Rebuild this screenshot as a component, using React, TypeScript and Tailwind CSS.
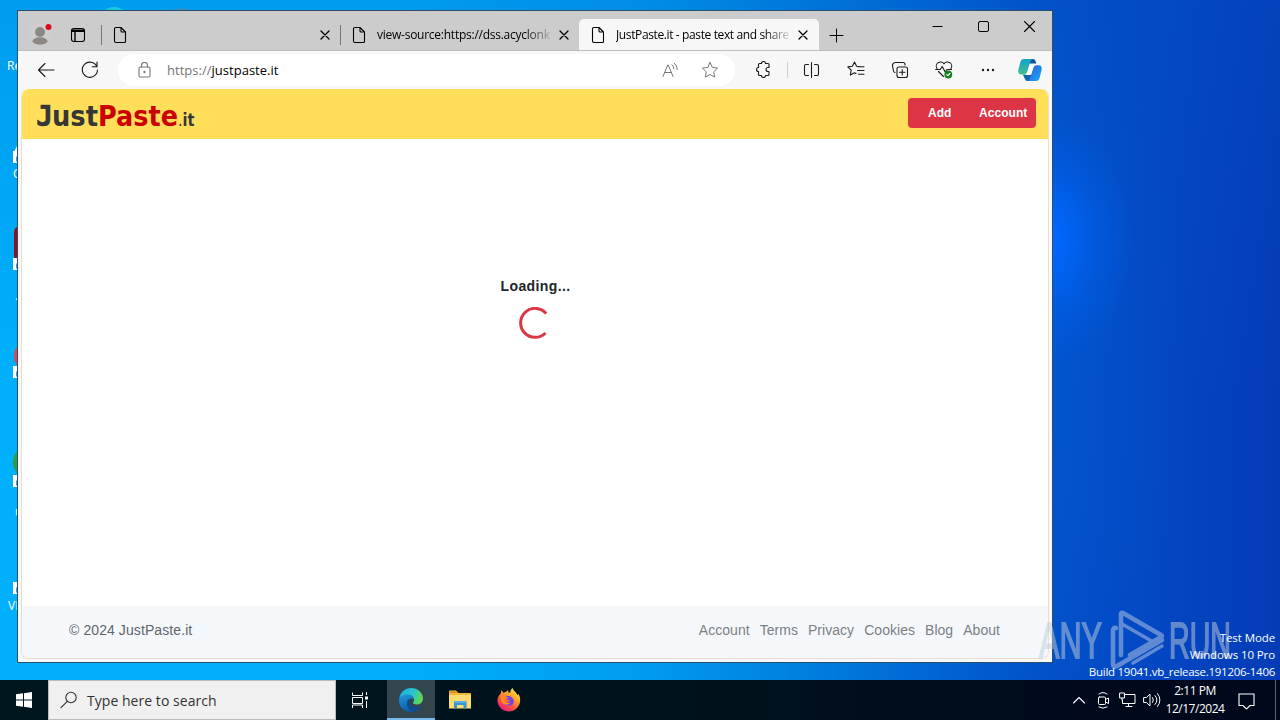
import type { ReactNode } from "react";

const UI = "font-['Open_Sans','Noto_Sans',sans-serif]";

function Svg({ w, h, vb, className = "", children }: { w: number; h: number; vb?: string; className?: string; children: ReactNode }) {
  return (
    <svg width={w} height={h} viewBox={vb ?? `0 0 ${w} ${h}`} fill="none" stroke="currentColor" strokeWidth="1.1" strokeLinecap="round" strokeLinejoin="round" className={`block shrink-0 ${className}`}>
      {children}
    </svg>
  );
}

const PageIcon = () => (
  <Svg w={14} h={18}>
    <path d="M3 1.500h5L12.500 6v9.500a1 1 0 0 1-1 1H3a1.500 1.500 0 0 1-1.500-1.500V3A1.500 1.500 0 0 1 3 1.500ZM8 1.500V5a1 1 0 0 0 1 1h3.500" />
  </Svg>
);

const Close = () => (
  <Svg w={10} h={10}>
    <path d="m1 1 8 8M9 1 1 9" strokeWidth="1.300" />
  </Svg>
);

function Tab({ title, active, className }: { title: string; active?: boolean; className: string }) {
  return (
    <div className={`flex h-[31px] shrink-0 items-center pt-px ${active ? "rounded-t-[5px] bg-[#f7f7f7]" : ""} ${className}`}>
      <PageIcon />
      <div className="ml-[11px] h-5 w-[174px] overflow-hidden [mask-image:linear-gradient(to_right,black_148px,transparent_177px)]">
        <span className="block w-max text-[12px] leading-5 tracking-[-0.38px]">{title}</span>
      </div>
      <div className="ml-2"><Close /></div>
    </div>
  );
}

function TabStrip() {
  return (
    <div className="flex h-10 items-end border-b border-[#bdbdbd] bg-[#cccccc]">
      <div className="flex h-8 w-11 items-center justify-center">
        <Svg w={24} h={24} className="mb-0.5">
          <circle cx="12" cy="12" r="11" fill="#d0cecd" stroke="none" />
          <circle cx="12" cy="11" r="5" fill="#8b8886" stroke="none" />
          <ellipse cx="12" cy="20" rx="7.500" ry="3.700" fill="#8b8886" stroke="none" />
          <circle cx="20.500" cy="6" r="3" fill="#d90b20" stroke="none" />
        </Svg>
      </div>
      <div className="flex h-[31px] w-8 items-center justify-center pt-px">
        <Svg w={16} h={16}>
          <rect x="1.500" y="1.500" width="13" height="13" rx="2.500" />
          <path d="M2 3.200h12M2 4.300h12M5 5v9" strokeWidth="1.400" />
        </Svg>
      </div>
      <div className="mb-[5px] ml-[7px] h-5 w-px bg-[#777]" />
      <Tab title="" className="w-[238px] pl-[11px]" />
      <div className="mb-[5px] h-5 w-px bg-[#777]" />
      <Tab title="view-source:https://dss.acyclonk" className="w-[238px] pl-[11px] [&_span]:tracking-[-0.25px]" />
      <Tab title="JustPaste.it - paste text and share" active className="w-[240px] pl-3" />
      <div className="flex h-[31px] w-[35px] items-center justify-center pt-px">
        <Svg w={15} h={15}><path d="M7.500 1v13M1 7.500h13" strokeWidth="1" /></Svg>
      </div>
      <div className="mb-[9px] ml-auto flex h-[30px] items-center">
        <div className="flex w-[46px] justify-center"><Svg w={11} h={11}><path d="M.5 5.500h10" strokeLinecap="butt" strokeWidth="1" /></Svg></div>
        <div className="flex w-[46px] justify-center"><Svg w={11} h={11}><rect x=".5" y=".5" width="10" height="10" rx="1.500" strokeWidth="1" /></Svg></div>
        <div className="flex w-[46px] justify-center"><Svg w={11} h={11}><path d="m.5.5 10 10M10.500.5l-10 10" /></Svg></div>
      </div>
    </div>
  );
}

function Tool({ children, className = "w-11" }: { children: ReactNode; className?: string }) {
  return <div className={`flex h-8 shrink-0 items-center justify-center ${className}`}>{children}</div>;
}

function Toolbar() {
  return (
    <div className="flex h-[37px] items-center bg-[#f7f7f7] pl-1.5 text-[#1b1b1b]">
      <Tool><Svg w={18} h={16}><path d="M17 8H1.500M8 1.500 1.500 8 8 14.500" strokeWidth="1.100" /></Svg></Tool>
      <Tool>
        <Svg w={18} h={18}><path d="M15.800 5.500A7.600 7.600 0 1 0 16.500 9M16 1v4.700h-4.700" /></Svg>
      </Tool>
      <div className="ml-1.5 flex h-8 w-[617px] shrink-0 items-center rounded-full bg-white pl-5 text-[#767676]">
        <Svg w={13} h={16}>
          <rect x="1" y="5" width="11" height="10" rx="1.500" />
          <path d="M3.500 5V3.500a3 3 0 0 1 6 0V5" />
          <circle cx="6.500" cy="10" r=".6" fill="currentColor" />
        </Svg>
        <span className="ml-4 text-[13px] leading-5 tracking-[0.02px]">https://<span className="text-black">justpaste.it</span></span>
        <div className="ml-auto flex items-center pr-4">
          <Svg w={17} h={16} className="mr-[22px]">
            <path d="M1 14.500 5.700 3h.6L11 14.500M2.700 10.500h6.600M10 2.800q2 1.400 2 4M12.300 1.200q3 2.300 3 6.300" strokeWidth="1" />
          </Svg>
          <Svg w={18} h={18}>
            <path d="m9 1.500 2.300 4.900 5.300.7-3.900 3.700 1 5.300L9 13.500l-4.700 2.600 1-5.300-3.900-3.700 5.300-.7Z" strokeWidth="1" />
          </Svg>
        </div>
      </div>
      <Tool className="ml-1.5 w-11">
        <Svg w={16} h={17}>
          <path d="M4.500 2.500H6.500a2 2 0 0 1 4 0H13a1 1 0 0 1 1 1V6.500H13a1.900 1.900 0 0 0 0 4h1v3a1 1 0 0 1-1 1h-2.500a2 2 0 0 1-4 0H4.500a1 1 0 0 1-1-1v-3a2 2 0 1 1 0-4v-3a1 1 0 0 1 1-1Z" />
        </Svg>
      </Tool>
      <div className="ml-0.5 mr-px h-4 w-px bg-[#cfcfcf]" />
      <Tool><Svg w={17} h={16}><path d="M5.500 2.500H3A1.500 1.500 0 0 0 1.500 4v8A1.500 1.500 0 0 0 3 13.500h2.500M11.500 2.500H14A1.500 1.500 0 0 1 15.500 4v8a1.500 1.500 0 0 1-1.500 1.500h-2.500M8.500.6v15" /></Svg></Tool>
      <Tool className="ml-px w-11"><Svg w={18} h={17}><path d="m12 5.500-2.400-.3L7.500 1 5.400 5.200.8 5.900l3.400 3.300-.9 4.900 4.200-2.300 1.500.8M11 5.800h6M10.500 9.500H17M11.500 13.200H17" /></Svg></Tool>
      <Tool>
        <Svg w={18} h={18}>
          <rect x="6" y="6" width="10.500" height="10.500" rx="2" />
          <path d="M11.250 8.500v5.500M8.500 11.250H14M14 4V3.500A2 2 0 0 0 12 1.500H4.500a3 3 0 0 0-3 3.500l1 5a2 2 0 0 0 1.500 1.500" />
        </Svg>
      </Tool>
      <Tool>
        <Svg w={18} h={18}>
          <path d="M2 7.500a4 4 0 0 1 7-4.700 4 4 0 0 1 7 4.700M3.500 10.500 8.500 15.500M.7 8.500h4.500l2-3 3 5.500 1.800-2.500h4.500" />
          <circle cx="13.300" cy="13.500" r="3.900" fill="#16811d" stroke="none" />
          <path d="m11.700 13.600 1.100 1.100 2.100-2.200" stroke="white" />
        </Svg>
      </Tool>
      <Tool>
        <Svg w={14} h={4}>
          <circle cx="2" cy="2" r="1.200" fill="currentColor" stroke="none" />
          <circle cx="7" cy="2" r="1.200" fill="currentColor" stroke="none" />
          <circle cx="12" cy="2" r="1.200" fill="currentColor" stroke="none" />
        </Svg>
      </Tool>
      <Tool className="w-10">
        <Svg w={24} h={22}>
          <defs>
            <linearGradient id="cpA" x1="0" y1="0" x2="0" y2="1"><stop stopColor="#149fce" /><stop offset="1" stopColor="#40c18d" /></linearGradient>
            <linearGradient id="cpB" x1="0" y1="0" x2="1" y2="1"><stop stopColor="#3560cb" /><stop offset="1" stopColor="#18a8ff" /></linearGradient>
          </defs>
          <g stroke="none">
            <path d="M10 0h5c1.800 0 2.600 1.500 3.200 4.500H11Z" fill="#0c57a1" />
            <path d="M5 15.500h8.500L12 22H9.500C7.500 22 6.500 19.500 5 15.500Z" fill="#1164b5" />
            <path d="M6 0h9c-1.500 0-2.300 1.500-2.800 3L9.500 12c-.6 2-1.600 3.500-3.500 3.500H3.200C.5 15.500-.2 13 .4 10.500l2-7.500C3 1 4.200 0 6 0Z" fill="url(#cpA)" />
            <path d="M18 22H9.300c1.500 0 2.300-1.500 2.800-3l2.700-9c.6-2 1.600-3.700 3.500-3.700h2.500c2.700 0 3.400 2.200 2.800 4.700l-2 8C21 21 19.800 22 18 22Z" fill="url(#cpB)" />
            <path d="M13.500 6.300h4.300c-1.500.4-2.400 1.700-2.900 3.400l-1.500 5c-.3 1-1.200 1.300-2.200 1.300H6.500c1.500-.3 2.400-1.700 3-3.500l1.300-4.200c.4-1.300 1.200-2 2.700-2Z" fill="white" />
          </g>
        </Svg>
      </Tool>
    </div>
  );
}

function Page() {
  return (
    <div className="mx-[3px] mt-px flex h-[570px] flex-col overflow-hidden rounded-lg border border-t-0 border-[#ecdcd3] bg-white font-['Liberation_Sans',sans-serif]">
      <header className="flex h-[50px] shrink-0 items-start justify-between bg-[#ffde59] pl-[15px] pr-3 pt-[9px]">
        <Svg w={160} h={36}>
          <g stroke="none" fontFamily="'DejaVu Sans','Noto Sans',sans-serif" fontWeight="700">
            <text y="28" fontSize="28.5" fill="#363636">
              <tspan x="-1" textLength="17" lengthAdjust="spacingAndGlyphs" fontFamily="'DejaVu Sans Mono',monospace" stroke="#363636" strokeWidth=".5">J</tspan>
              <tspan x="15" textLength="46" lengthAdjust="spacingAndGlyphs">ust</tspan>
            </text>
            <text x="61" y="28" fontSize="28.5" fill="#cc0000" textLength="80" lengthAdjust="spacingAndGlyphs">Paste</text>
            <text x="141" y="28" fontSize="17" fill="#363636" textLength="16.500" lengthAdjust="spacingAndGlyphs"><tspan fontWeight="400">.</tspan>it</text>
          </g>
        </Svg>
        <nav className="flex h-[30px] w-32 items-center rounded bg-[#dc3545] pl-5 text-[12px] font-bold text-white">
          <a className="w-[51px] tracking-[0.05px]">Add</a>
          <a className="tracking-[0.05px]">Account</a>
        </nav>
      </header>
      <main className="flex flex-1 flex-col items-center pt-[137px]">
        <p className="pl-px text-[14px] font-bold leading-5 tracking-[0.38px] text-[#212529]">Loading...</p>
        <Svg w={32} h={32} className="mt-[11px] text-[#dc3545]">
          <path d="M27.200 6.500A14.500 14.500 0 1 0 26.500 26" strokeWidth="3" strokeLinecap="butt" />
        </Svg>
      </main>
      <footer className="flex h-[52px] shrink-0 items-center justify-between bg-[#f5f8fb] pb-[3px] pl-[47px] pr-[48px] text-[14px] text-[#5f656b]">
        <span className="tracking-[0.09px]">© 2024 JustPaste.it</span>
        <nav className="flex gap-[10px] tracking-[0.04px] text-[#7b7f84]">
          <a>Account</a><a>Terms</a><a>Privacy</a><a>Cookies</a><a>Blog</a><a>About</a>
        </nav>
      </footer>
    </div>
  );
}

function Shortcut({ className }: { className: string }) {
  return (
    <div className={`absolute left-[13px] h-3 w-3 bg-white ${className}`}>
      <Svg w={12} h={12} className="text-[#2370b8]"><path d="M4 10V6h4M6 4l2 2-2 2" strokeWidth="1.500" /></Svg>
    </div>
  );
}

function DesktopIcons() {
  return (
    <>
      <div className="absolute left-[98px] top-[7px] h-8 w-8 rounded-full bg-[#18c8d8]" />
      <div className="absolute left-[164px] top-[8px] h-6 w-9 rounded-[50%] bg-[#2a93cc]" />
      <span className="absolute left-[7px] top-[58px] text-[12px] leading-4">Re</span>
      <Shortcut className="top-[151px]" />
      <Svg w={6} h={6} className="absolute left-[14px] top-[146px]"><path d="M0 6 3 0l3 6Z" fill="white" stroke="none" /></Svg>
      <span className="absolute left-[13px] top-[166px] text-[12px] leading-4">C</span>
      <div className="absolute left-[14px] top-[226px] h-9 w-10 rounded-md bg-[#8f1218]" />
      <Shortcut className="top-[258px]" />
      <span className="absolute left-[15px] top-[288px] text-[12px] leading-4">.</span>
      <div className="absolute left-[14px] top-[340px] h-8 w-8 rounded-full bg-[#e0474c]" />
      <Shortcut className="top-[366px]" />
      <div className="absolute left-[13px] top-[446px] h-8 w-8 rounded-full bg-[#2f9b43]" />
      <Shortcut className="top-[475px]" />
      <span className="absolute left-[15px] top-[504px] text-[12px] leading-4">u</span>
      <Shortcut className="top-[582px]" />
      <span className="absolute left-[8px] top-[598px] text-[12px] leading-4">VL</span>
    </>
  );
}

function Watermark() {
  return (
    <svg width="200" height="64" viewBox="0 0 200 64" fill="none" className="absolute left-[1036px] top-[608px] opacity-50">
      <g fill="#c3ccd8" stroke="#c3ccd8" strokeWidth="1.8" fontFamily="'Liberation Sans Narrow','Liberation Sans',sans-serif" fontSize="50">
        <text x="3" y="50" textLength="63" lengthAdjust="spacingAndGlyphs">ANY</text>
        <text x="133" y="50" textLength="62" lengthAdjust="spacingAndGlyphs">RUN</text>
      </g>
      <g stroke="#bccce4" strokeWidth="4.500" strokeLinejoin="round" strokeLinecap="round">
        <path d="M85 47V6q0-2 2-1l38 22q2 1 0 2L94 47" />
        <path d="M80 20q-3-1-3 3v33q0 4 4 2l45-26" />
        <path d="m86 16 33 19M97 55 126 38" strokeWidth="3.500" />
      </g>
    </svg>
  );
}

function Taskbar() {
  return (
    <div className="flex h-10 w-full items-center bg-[linear-gradient(to_right,#00161f,#00131c_50%,#000b1c_78%,#00081c)] text-white">
      <div className="flex w-12 justify-center">
        <Svg w={16} h={16}><path d="M0 2.300 7 1.300V7.500H0ZM8 1.200 16 0v7.500H8ZM0 8.500h7v6.200l-7-1ZM8 8.500h8V16l-8-1.200Z" fill="white" stroke="none" /></Svg>
      </div>
      <div className="flex h-10 w-72 items-center border border-[#b9bcbd] bg-[#f0f0f0] pl-[11px] text-[#333]">
        <Svg w={18} h={18}><circle cx="11" cy="6.500" r="5.200" /><path d="M7.300 10.300 1 16.700" /></Svg>
        <span className="ml-[9px] mt-0.5 text-[14px] leading-5 tracking-[0.04px]">Type here to search</span>
      </div>
      <div className="flex w-[51px] justify-center">
        <Svg w={18} h={16} className="mr-[3px]"><g strokeWidth="1" strokeLinecap="butt" strokeLinejoin="miter"><path d="M1.500.5v3h10v-3M1.500 5.500h10v6h-10ZM1.500 16v-3h10v3M15.500 0v3M15.500 9v7" /><rect x="14" y="4.500" width="3" height="3" fill="white" stroke="none" /></g></Svg>
      </div>
      <div className="flex h-10 w-12 items-center justify-center border-b-2 border-[#76b9ed] bg-[#33454d]">
        <Svg w={24} h={24} className="mt-px">
          <defs>
            <linearGradient id="eA" x1="0" y1=".2" x2="1" y2=".5"><stop stopColor="#1baee5" /><stop offset=".55" stopColor="#27c5cf" /><stop offset="1" stopColor="#62d94c" /></linearGradient>
            <linearGradient id="eB" x1=".2" y1="0" x2=".5" y2="1"><stop stopColor="#1f96dd" /><stop offset="1" stopColor="#0c59a4" /></linearGradient>
          </defs>
          <g stroke="none">
            <path d="M.2 11C.8 4.500 6 0 12 0c7 0 12 5 12 10.200 0 4-3 6.300-6.300 6.300-2.600 0-4.300-1-3.700-1.900 2.500-2.500.8-7.600-5-7.600C4.500 7 1 9 .2 11Z" fill="url(#eA)" />
            <path d="M.1 11.500C1 8.500 4.500 6.500 8.500 6.500c4.500 0 6.500 3 6.500 5.300 0-1.500-5.500-2.500-6.800 2-1 4.500 2.800 9.200 6.800 9.800C7 26-.8 19.500.1 11.500Z" fill="url(#eB)" />
            <path d="M9.300 11.500c-3.500 6 1.700 13 7.500 11.500 2.500-.9 4.700-2.800 5.900-4.800-4.700 2.500-12.500.3-13.400-6.700Z" fill="#104a91" />
          </g>
        </Svg>
      </div>
      <div className="flex w-[49px] justify-center">
        <Svg w={22} h={20}>
          <g stroke="none">
            <path d="M0 1.500Q0 .5 1 .5h6l2.500 2.500H21q1 0 1 1V18H0Z" fill="#f4b93c" />
            <path d="M0 5h22v13.500H0Z" fill="#ffdc70" />
            <path d="M1 1.500h7l1 1.500H1Z" fill="#d98a16" />
            <path d="M5 11h12.500v7.500H14.500V15h-6.500v3.500H5Z" fill="#3795d5" />
            <path d="M5 11h12.500v2H5Z" fill="#5aafe2" />
          </g>
        </Svg>
      </div>
      <div className="flex w-[49px] justify-center">
        <Svg w={24} h={24}>
          <defs>
            <linearGradient id="fA" x1=".9" y1="0" x2=".2" y2="1"><stop stopColor="#fff44f" /><stop offset=".35" stopColor="#ffac28" /><stop offset=".65" stopColor="#ff563d" /><stop offset="1" stopColor="#e31587" /></linearGradient>
          </defs>
          <g stroke="none">
            <path d="M3.700 5.500 4.500 2l2 2.800c1-.7 1.600-.8 2.500-.8L11 2l.5 2.700 2-.4c-.3-2 .8-3.500 2.300-4.300.3 3 3.700 4 4.700 7.200L21.500 6c2.800 5 2 10.500-1.800 14.200-6 6-16.700 3.200-18.900-5.200C0 11.500.8 8 3.700 5.500Z" fill="url(#fA)" />
            <path d="M7.300 10.200c2-2.700 5-2.500 7.400-1 2.800 1.800 2.800 6.300-.2 8-3.200 1.800-7.300-.2-7.700-3.700 1.200 1.200 3 1.500 4.600.3l2.100-1.200-3.500-1.200Z" fill="#7542e5" />
            <path d="M3.500 7 7 8l4 1.500q-.3 1.700-3.300 2.300c.3 2.700 3.300 3.800 5.800 2.700-2.300 3.700-9.500 2-9.500-3Z" fill="#ff8a1e" />
          </g>
        </Svg>
      </div>
      <div className="ml-auto flex h-10 items-center">
        <Svg w={12} h={8} className="mr-[12px]"><path d="m.5 7 5.500-5.500L11.500 7" /></Svg>
        <Svg w={13} h={18} className="mr-[9px]"><g strokeWidth="1"><rect x="1.500" y="6" width="7" height="7.500" rx="1" /><path d="m8.500 8.500 3-1.500v5.500l-3-1.500M2 3q4-3 8 0M2 16q4 2.500 8 0" /></g></Svg>
        <Svg w={17} h={16} className="mr-[7px]"><g strokeWidth="1" strokeLinejoin="miter"><path d="M6 2.500h10v9H3.500V8M7 14.500h6M9.500 12v2.500M1 1h4.500v5H1ZM3 6v2" /></g></Svg>
        <Svg w={18} h={16} className="mr-[5px]"><path d="M1 5.500h2.500L7 2v12l-3.500-3.500H1ZM9.500 5.500q2 2.500 0 5M12 3.500q4 4.500 0 9M14.500 1.500q5 6.500 0 13" strokeWidth="1" /></Svg>
        <div className="flex w-[58px] flex-col items-center whitespace-nowrap pb-px text-[12px] leading-[18px] tracking-[-0.48px]"><span>2:11 PM</span><span>12/17/2024</span></div>
        <Svg w={17} h={17} className="ml-[14px] mt-0.5"><path d="M1 1h15v11.500h-4L8.500 16 5 12.500H1Z" strokeLinejoin="miter" /></Svg>
        <div className="ml-5 mr-1 h-10 w-px bg-[#5b6270]" />
      </div>
    </div>
  );
}

export default function App() {
  return (
    <div className={`relative flex h-[720px] w-[1280px] flex-col justify-end overflow-hidden text-white ${UI} bg-[radial-gradient(ellipse_85px_125px_at_1048px_240px,#0068ff_0%,#0066fcd0_25%,#0060ec70_60%,#0058d800_100%),radial-gradient(ellipse_150px_420px_at_1040px_380px,#0064e050_0%,#0060e000_100%),linear-gradient(to_bottom,#0058c838_0%,#0058c800_55%),linear-gradient(to_right,#00b0fa_0%,#00b0fa_30%,#009cf0_50%,#007adc_65%,#0250c8_81%,#0446c2_91%,#043cb6_100%)]`}>
      <DesktopIcons />
      <div className="absolute left-[17px] top-[10px] h-[653px] w-[1036px] border border-[#284f6b] bg-[#f7f7f7] text-black">
        <TabStrip />
        <Toolbar />
        <Page />
      </div>
      <Watermark />
      <div className="absolute right-[5px] top-[629px] whitespace-nowrap text-right text-[11.500px] leading-[17px]">
        <p className="tracking-[-0.1px]">Test Mode</p>
        <p className="tracking-[-0.1px]">Windows 10 Pro</p>
        <p className="tracking-[-0.27px]">Build 19041.vb_release.191206-1406</p>
      </div>
      <Taskbar />
    </div>
  );
}
